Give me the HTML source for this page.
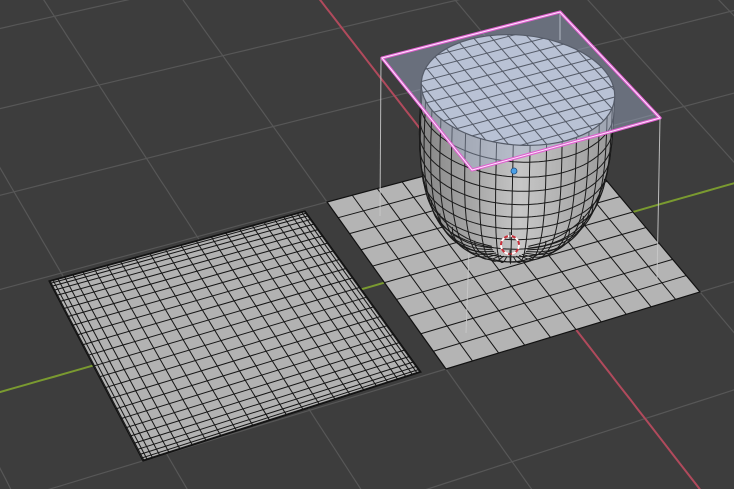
<!DOCTYPE html>
<html><head><meta charset="utf-8"><style>
html,body{margin:0;padding:0;background:#3d3d3d;overflow:hidden;width:734px;height:489px}
svg{display:block;position:absolute;left:0;top:0}
</style></head><body>
<svg id="s" width="734" height="489" viewBox="0 0 734 489" xmlns="http://www.w3.org/2000/svg">
<defs>
<linearGradient id="bg" gradientUnits="userSpaceOnUse" x1="420" y1="0" x2="620" y2="0">
<stop offset="0" stop-color="#858585"/><stop offset="0.5" stop-color="#c6c6c6"/><stop offset="1" stop-color="#959595"/>
</linearGradient>
<clipPath id="capclip"><ellipse cx="518" cy="90" rx="97" ry="55" transform="rotate(5 518 90)"/></clipPath>
</defs>
<rect width="734" height="489" fill="#3d3d3d"/>
<g id="grid" stroke="#575757" stroke-width="1.2" fill="none"></g>
<g id="axes" fill="none" stroke-width="2"></g>
<g id="rplane"></g>
<g id="lplane"></g>
<g stroke="#c8c8c8" stroke-width="1" opacity="0.9">
<line x1="381" y1="58" x2="380" y2="216"/>
<line x1="472" y1="170" x2="466" y2="333"/>
<line x1="660" y1="118" x2="657" y2="280"/>
<line x1="560" y1="12" x2="560" y2="40"/>
</g>
<g id="cup"></g>
<g id="cap"></g>
<polygon points="382,58 560,12 660,118 472,170" fill="#a8b4d4" fill-opacity="0.42"/>
<polygon points="382,58 560,12 660,118 472,170" fill="none" stroke="#e060d0" stroke-width="3.2" stroke-linejoin="round"/>
<polygon points="382,58 560,12 660,118 472,170" fill="none" stroke="#ffe6ff" stroke-width="1"/>
<circle cx="514" cy="171" r="3" fill="#4aa0e8" stroke="#1d4f80" stroke-width="0.8"/>
<circle cx="510" cy="245" r="9" fill="none" stroke="#c8303a" stroke-width="2"/>
<circle cx="510" cy="245" r="9" fill="none" stroke="#fff" stroke-width="2" stroke-dasharray="4 4"/>
<line x1="510" y1="232" x2="510" y2="240" stroke="#333" stroke-width="1"/>
<line x1="510" y1="250" x2="510" y2="258" stroke="#333" stroke-width="1"/>
</svg>
<script>
var NS="http://www.w3.org/2000/svg";
function H(p){var x0=p[0][0],y0=p[0][1],x1=p[1][0],y1=p[1][1],x2=p[2][0],y2=p[2][1],x3=p[3][0],y3=p[3][1];
var dx1=x1-x2,dx2=x3-x2,dx3=x0-x1+x2-x3,dy1=y1-y2,dy2=y3-y2,dy3=y0-y1+y2-y3;
var den=dx1*dy2-dx2*dy1,g=(dx3*dy2-dx2*dy3)/den,h=(dx1*dy3-dx3*dy1)/den;
var a=x1-x0+g*x1,b=x3-x0+h*x3,c=x0,d=y1-y0+g*y1,e=y3-y0+h*y3,f=y0;
return function(u,v){var w=g*u+h*v+1;return [(a*u+b*v+c)/w,(d*u+e*v+f)/w,w];};}
function el(t,at,par){var e=document.createElementNS(NS,t);for(var k in at)e.setAttribute(k,at[k]);par.appendChild(e);return e;}
var R=H([[327,202],[446,369],[700,292],[570,137]]);
function W(u,v){return R((u+1)/2,(v+1)/2);}
var grid=document.getElementById('grid');
function wline(par,fixedU,val,att){var pts=[];for(var i=-400;i<=400;i++){var t=i/10;var p=fixedU?W(val,t):W(t,val);if(p[2]>0.08&&p[0]>-300&&p[0]<1100&&p[1]>-300&&p[1]<800)pts.push(p[0].toFixed(1)+","+p[1].toFixed(1));}
if(pts.length>1){att.points=pts.join(" ");el('polyline',att,par);}}
for(var k=-30;k<=30;k++){if(k==0)continue;wline(grid,true,k,{});wline(grid,false,k,{});}
var ax=document.getElementById('axes');
wline(ax,false,0,{stroke:"#b04a5c","stroke-width":"2"});
wline(ax,true,0,{stroke:"#7a9a30","stroke-width":"2"});
function plane(par,Q,ts,fill){var c=[Q(0,0),Q(1,0),Q(1,1),Q(0,1)];
el('polygon',{points:c.map(function(p){return p[0]+","+p[1]}).join(" "),fill:fill,stroke:"#111","stroke-width":"1.2"},par);
ts.forEach(function(t){var a=Q(t,0),b=Q(t,1),c2=Q(0,t),d=Q(1,t);
el('line',{x1:a[0],y1:a[1],x2:b[0],y2:b[1],stroke:"#151515","stroke-width":"1"},par);
el('line',{x1:c2[0],y1:c2[1],x2:d[0],y2:d[1],stroke:"#151515","stroke-width":"1"},par);});}
var rts=[];for(var i=1;i<10;i++)rts.push(i/10);
plane(document.getElementById('rplane'),R,rts,"#b4b4b4");
var L=H([[49,281],[305,211],[421,372],[143,461]]);
var lts=[];var N=26;for(var i=1;i<N;i++)lts.push((1-Math.cos(Math.PI*i/N))/2);
plane(document.getElementById('lplane'),L,lts,"#b2b2b2");
var cup=document.getElementById('cup');
function ring(h){var rx=97*Math.pow(Math.max(0,1-Math.pow(h,3.6)),0.5);var ry=rx*0.56;var cx=518-8*h;var cy=90+158*h;return {cx:cx,cy:cy,rx:rx,ry:ry};}
function pt(h,th){var r=ring(h);var rot=5*Math.PI/180*(1-h);var x=r.rx*Math.cos(th),y=r.ry*Math.sin(th);
return [r.cx+x*Math.cos(rot)-y*Math.sin(rot),r.cy+x*Math.sin(rot)+y*Math.cos(rot)];}
for(var i=0;i<=100;i++){var h=i/100;var r=ring(h);if(r.rx<0.5)continue;
el('ellipse',{cx:r.cx,cy:r.cy,rx:r.rx,ry:r.ry,fill:"url(#bg)",transform:"rotate("+(5*(1-h))+" "+r.cx+" "+r.cy+")"},cup);}
for(var j=1;j<=11;j++){var h=Math.pow(j/11.5,0.9);var pts=[];for(var a=0;a<=60;a++){var th=-0.05+(Math.PI+0.1)*a/60;var p=pt(h,th);pts.push(p[0].toFixed(1)+","+p[1].toFixed(1));}
el('polyline',{points:pts.join(" "),fill:"none",stroke:"#1a1a1a","stroke-width":"1"},cup);}
for(var m=0;m<=18;m++){var th=m*Math.PI/18;var pts=[];for(var i=0;i<=40;i++){var p=pt(i/40*0.99,th);pts.push(p[0].toFixed(1)+","+p[1].toFixed(1));}
el('polyline',{points:pts.join(" "),fill:"none",stroke:"#1a1a1a","stroke-width":"1"},cup);}
var cap=document.getElementById('cap');
el('ellipse',{cx:518,cy:90,rx:97,ry:55,fill:"#c6ccd6",stroke:"#1a1a1a","stroke-width":"1.2",transform:"rotate(5 518 90)"},cap);
var g=el('g',{"clip-path":"url(#capclip)",stroke:"#1a1a1a","stroke-width":"1"},cap);
var A=[382,58],B=[560,12],C=[660,118],D=[472,170];
for(var i=1;i<12;i++){var t=i/12;
var p1=[A[0]+(B[0]-A[0])*t,A[1]+(B[1]-A[1])*t],p2=[D[0]+(C[0]-D[0])*t,D[1]+(C[1]-D[1])*t];
el('line',{x1:p1[0],y1:p1[1],x2:p2[0],y2:p2[1]},g);
var q1=[A[0]+(D[0]-A[0])*t,A[1]+(D[1]-A[1])*t],q2=[B[0]+(C[0]-B[0])*t,B[1]+(C[1]-B[1])*t];
el('line',{x1:q1[0],y1:q1[1],x2:q2[0],y2:q2[1]},g);}
</script>
</body></html>
